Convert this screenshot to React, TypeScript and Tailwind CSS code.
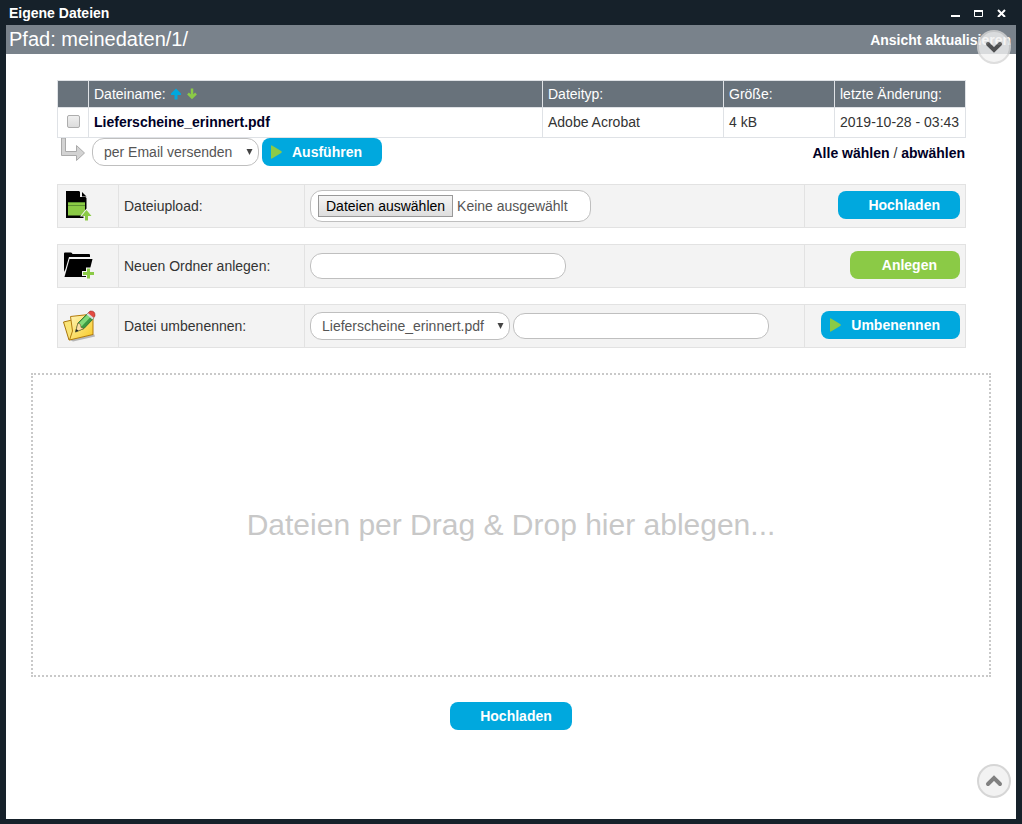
import type { ReactNode } from "react";
import { clsx } from "clsx";

const files = [
  { name: "Lieferscheine_erinnert.pdf", type: "Adobe Acrobat", size: "4 kB", changed: "2019-10-28 - 03:43" },
];

type ActionButtonProps = {
  children: ReactNode;
  tone?: "blue" | "green";
  play?: boolean;
};

function ActionButton({ children, tone = "blue", play = false }: ActionButtonProps) {
  return (
    <button
      type="button"
      className={clsx(
        "flex h-7 shrink-0 items-center rounded-lg text-sm font-bold text-white",
        play ? "gap-2.5 pr-5 pl-[9px]" : tone === "green" ? "pr-[23px] pl-8" : "pr-5 pl-[30px]",
        tone === "blue" ? "bg-[#00a8de]" : "bg-[#8bca46]",
      )}
    >
      {play && (
        <svg width="11" height="14" viewBox="0 0 11 14" aria-hidden="true">
          <path d="M0 1 Q0 0 1 .5 L10.5 6.3 Q11 7 10.5 7.7 L1 13.5 Q0 14 0 13Z" fill="#8bca46" />
        </svg>
      )}
      {children}
    </button>
  );
}

type PillSelectProps = {
  id: string;
  label?: string;
  option: string;
  className: string;
};

function PillSelect({ id, label, option, className }: PillSelectProps) {
  return (
    <span className={clsx("relative h-7 shrink-0", className)}>
      <select
        id={id}
        aria-label={label}
        className="h-full w-full appearance-none rounded-xl border border-[#bfbfbf] bg-white pl-[11px] text-sm text-[#555]"
      >
        <option>{option}</option>
      </select>
      <svg className="pointer-events-none absolute top-[11px] right-1.5" width="7" height="6" viewBox="0 0 7 6" aria-hidden="true">
        <path d="M0.500 0H6.500L3.500 6Z" fill="#444" />
      </svg>
    </span>
  );
}

function UploadIcon() {
  return (
    <svg width="30" height="32" viewBox="0 0 30 32" aria-hidden="true">
      <path d="M3 1H16L23.500 8V28H3Z" fill="#000" />
      <path d="M17 0L24 7H17Z" fill="#f3f3f3" />
      <path d="M19 2L23.500 6.500H19Z" fill="#000" />
      <path d="M5 12.500H22V25.500H5Z" fill="#8bca46" />
      <path d="M5 12.500H22M5 15.500H22" stroke="#5b9130" />
      <path d="M23.500 18.500L30 26.500H26V32H20.500V26.500H17Z" fill="#f3f3f3" />
      <path d="M23.500 20L28.500 26H25V30.500H22V26H18.500Z" fill="#8bca46" />
    </svg>
  );
}

function FolderIcon() {
  return (
    <svg width="32" height="28" viewBox="0 0 32 28" aria-hidden="true">
      <path d="M1 1.500Q1 .5 2 .5H8Q9 .5 9.500 2H26Q27 2 27 3V5H6L2.500 17L1 20Z" fill="#000" />
      <path d="M6.500 7H29.500L25 25H1.500Z" fill="#000" />
      <path d="M23 15.500H28V19H32V24H28V28H23V24H19V19H23Z" fill="#f3f3f3" />
      <path d="M24 16.500H27V20H31V23H27V26.500H24V23H20V20H24Z" fill="#8bca46" />
    </svg>
  );
}

function RenameIcon() {
  return (
    <svg width="34" height="32" viewBox="0 0 34 32" aria-hidden="true">
      <defs>
        <linearGradient id="paper" x1="0" y1="0" x2="1" y2="1">
          <stop offset="0" stopColor="#fff6bd" />
          <stop offset="1" stopColor="#f8c91f" />
        </linearGradient>
      </defs>
      <path d="M7 30L10 31.500L32 26.500L31 24Z" fill="#777" opacity=".5" />
      <path d="M.5 12L9 10L12 28L6 30Z" fill="#fae476" stroke="#a8760d" />
      <path d="M7.500 6.500L30 4V24.500L6.500 30L9.500 21Z" fill="url(#paper)" stroke="#b37b0c" />
      <path d="M15 13L25 3L31 8L21 18.500L12.500 22Z" fill="#3c9a43" stroke="#175e29" strokeWidth=".7" />
      <path d="M16 13L25 4L28 6.500L18.500 16.500Z" fill="#82d978" />
      <path d="M15 13L12.500 22L21 18.500L18 17.500L17.500 14.500Z" fill="#fce0a7" stroke="#775122" strokeWidth=".5" />
      <path d="M13.300 19L12.500 22L15.500 20.800Z" fill="#222" />
      <path d="M24.500 3.500L27 1Q32.500 .5 32 6L30.500 8Z" fill="#e34b42" stroke="#8f211d" strokeWidth=".5" />
      <path d="M23.500 4.500L25 3L31 8L29.500 9.500Z" fill="#d9e1dc" />
    </svg>
  );
}

type FormRowProps = {
  icon: ReactNode;
  label: string;
  htmlFor: string;
  children: ReactNode;
  action: ReactNode;
};

function FormRow({ icon, label, htmlFor, children, action }: FormRowProps) {
  return (
    <form className="grid h-11 grid-cols-[61px_186px_1fr_160px] divide-x divide-[#e2e2e2] border border-[#e2e2e2] bg-[#f3f3f3]">
      <div className="flex items-center pl-[5px]">{icon}</div>
      <label htmlFor={htmlFor} className="flex items-center pl-[5px]">
        {label}
      </label>
      <div className="flex items-center gap-[3px] pl-[5px]">{children}</div>
      <div className="flex items-start justify-end pt-1.5 pr-[5px]">{action}</div>
    </form>
  );
}

function ScrollButton({ label, path, className }: { label: string; path: string; className: string }) {
  return (
    <button
      type="button"
      aria-label={label}
      className={clsx(
        "absolute right-[5px] flex size-[34px] items-center justify-center rounded-full border-2 border-[#d6d6d6] bg-[#f2f2f2]",
        className,
      )}
    >
      <svg width="18" height="12" viewBox="0 0 18 12" aria-hidden="true">
        <path d={path} fill="none" stroke="currentColor" strokeWidth="4" strokeLinecap="round" />
      </svg>
    </button>
  );
}

function SortArrow({ label, color, flip = false }: { label: string; color: string; flip?: boolean }) {
  return (
    <button type="button" aria-label={label}>
      <svg width="12" height="12" viewBox="0 0 12 12" aria-hidden="true">
        <path
          d={flip ? "M6 0.500V9M2 5.500L6 9.500L10 5.500" : "M6 0.500L11 5.500V7H7.500V11.500H4.500V7H1V5.500Z"}
          fill={flip ? "none" : color}
          stroke={flip ? color : "none"}
          strokeWidth="2.500"
        />
      </svg>
    </button>
  );
}

export default function App() {
  return (
    <div className="flex min-h-screen flex-col bg-[#16212a] px-1.5 pb-[5px] font-['Liberation_Sans',Arial,sans-serif] text-sm text-[#333]">
      <header className="flex h-[25px] items-center justify-between pr-2.5 pl-[3px] text-white">
        <h1 className="text-sm font-bold">Eigene Dateien</h1>
        <div className="flex items-center gap-3.5">
          <button type="button" aria-label="Minimieren">
            <svg width="9" height="9" viewBox="0 0 9 9">
              <path d="M0 8H9" stroke="currentColor" strokeWidth="2" />
            </svg>
          </button>
          <button type="button" aria-label="Maximieren">
            <svg width="9" height="9" viewBox="0 0 9 9">
              <path d="M.5 2.500H8.500V8.500H.5Z" fill="none" stroke="currentColor" />
              <path d="M0 2H9V4H0Z" fill="currentColor" />
            </svg>
          </button>
          <button type="button" aria-label="Schließen">
            <svg width="9" height="9" viewBox="0 0 9 9">
              <path d="M1 2L8 9M8 2L1 9" stroke="currentColor" strokeWidth="2" />
            </svg>
          </button>
        </div>
      </header>

      <main className="relative flex-1 bg-white">
        <div className="flex h-[29px] items-center justify-between bg-[#79828b] pr-[5px] pl-[3px] text-white">
          <h2 className="text-xl leading-[26px] pb-0.5">Pfad: meinedaten/1/</h2>
          <a href="#" className="font-bold">
            Ansicht aktualisieren
          </a>
        </div>

        <div className="pt-[26px] pr-[50px] pl-[51px]">
          <table className="w-full table-fixed border-collapse text-left [&_td]:border [&_td]:border-[#dfe2e6] [&_td]:px-[5px] [&_td]:pb-0.5 [&_th]:border [&_th]:border-[#dfe2e6] [&_th]:px-[5px] [&_th]:font-normal">
            <colgroup>
              <col className="w-[31px]" />
              <col />
              <col className="w-[181px]" />
              <col className="w-[111px]" />
              <col className="w-[131px]" />
            </colgroup>
            <thead className="bg-[#68727b] text-white">
              <tr className="h-[27px]">
                <th aria-label="Auswahl" />
                <th>
                  <span className="flex items-center gap-1">
                    Dateiname:
                    <SortArrow label="Aufsteigend sortieren" color="#00a8de" />
                    <SortArrow label="Absteigend sortieren" color="#8bca46" flip />
                  </span>
                </th>
                <th>Dateityp:</th>
                <th>Größe:</th>
                <th>letzte Änderung:</th>
              </tr>
            </thead>
            <tbody>
              {files.map((file) => (
                <tr key={file.name} className="h-[30px]">
                  <td>
                    <input
                      type="checkbox"
                      aria-label={file.name}
                      className="mx-auto block size-[13px] appearance-none rounded-xs border border-[#adadad] bg-linear-to-b from-[#efefef] to-[#dcdcdc]"
                    />
                  </td>
                  <td>
                    <a href="#" className="font-bold text-[#000026]">
                      {file.name}
                    </a>
                  </td>
                  <td>{file.type}</td>
                  <td>{file.size}</td>
                  <td className="whitespace-nowrap">{file.changed}</td>
                </tr>
              ))}
            </tbody>
          </table>

          <div className="flex h-7 items-center gap-[3px]">
            <svg width="32" height="28" viewBox="0 0 32 28" aria-hidden="true">
              <path d="M4.500 0V17.500H19.500V22.500L27.500 15L19.500 7.500V13.500H8.500V0Z" fill="#d3d3d3" stroke="#aaa" />
            </svg>
            <PillSelect id="file-action" label="Aktion" option="per Email versenden" className="w-[167px]" />
            <ActionButton play>Ausführen</ActionButton>
            <p className="ml-auto pt-0.5 pr-px">
              <a href="#" className="font-bold text-[#000026]">
                Alle wählen
              </a>
              {" / "}
              <a href="#" className="font-bold text-[#000026]">
                abwählen
              </a>
            </p>
          </div>

          <div className="mt-[18px] flex flex-col gap-4">
            <FormRow
              icon={<UploadIcon />}
              label="Dateiupload:"
              htmlFor="upload"
              action={<ActionButton>Hochladen</ActionButton>}
            >
              <label className="flex h-8 w-[281px] items-center gap-1 rounded-xl border border-[#bfbfbf] bg-white pl-[7px]">
                <input id="upload" type="file" multiple className="sr-only" />
                <span className="flex h-[22px] items-center border border-[#999] bg-linear-to-b from-[#f5f5f5] to-[#dedede] px-[7px] text-black">
                  Dateien auswählen
                </span>
                <span className="text-[#555]">Keine ausgewählt</span>
              </label>
            </FormRow>

            <FormRow
              icon={<FolderIcon />}
              label="Neuen Ordner anlegen:"
              htmlFor="folder-name"
              action={<ActionButton tone="green">Anlegen</ActionButton>}
            >
              <input
                id="folder-name"
                type="text"
                className="h-[26px] w-64 rounded-xl border border-[#bfbfbf] bg-white px-2.5"
              />
            </FormRow>

            <FormRow
              icon={<RenameIcon />}
              label="Datei umbenennen:"
              htmlFor="rename-file"
              action={<ActionButton play>Umbenennen</ActionButton>}
            >
              <PillSelect id="rename-file" option="Lieferscheine_erinnert.pdf" className="w-[200px]" />
              <input
                type="text"
                aria-label="Neuer Dateiname"
                className="h-[26px] w-64 rounded-xl border border-[#bfbfbf] bg-white px-2.5"
              />
            </FormRow>
          </div>
        </div>

        <div className="mx-[25px] mt-[25px] flex h-[304px] items-center justify-center border-2 border-dotted border-[#c9c9c9] text-3xl text-[#c8c8c8]">
          Dateien per Drag &amp; Drop hier ablegen...
        </div>

        <div className="mt-[25px] flex justify-center">
          <ActionButton>Hochladen</ActionButton>
        </div>

        <ScrollButton label="Nach unten" path="M3 3L9 9L15 3" className="top-[5px] text-[#444] opacity-80" />
        <ScrollButton label="Nach oben" path="M3 9L9 3L15 9" className="bottom-[21px] text-[#808080]" />
      </main>
    </div>
  );
}
